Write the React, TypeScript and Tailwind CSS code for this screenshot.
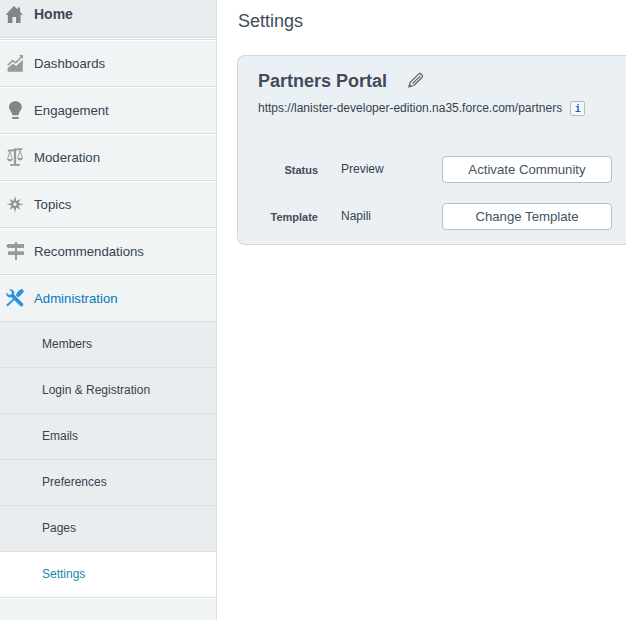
import type { ReactNode } from "react";

const icon = "-mt-px block shrink-0 overflow-visible";

const HomeIcon = () => (
  <svg className="block shrink-0 overflow-visible" width="18" height="18" viewBox="0 0 18 18" fill="#858585">
    <path d="M9 0.9 L12.6 4.5 V2.4 H15 V6.8 L18 9.8 H15.6 V18 H11 V12 H7.4 V18 H2.8 V9.8 H0.6 Z" />
  </svg>
);
const ChartIcon = () => (
  <svg className={icon} width="18" height="18" viewBox="0 0 18 18">
    <path d="M1.6 14.2 L6.8 9.8 L10.2 11.9 L16.8 5.7 V17.7 H1.6 Z" fill="#999" />
    <path d="M1.8 11.3 L6.3 6.8 L9.8 8.8 L15.6 2.8" fill="none" stroke="#999" strokeWidth="1.6" />
    <path d="M13.2 1 H17 V4.9 Z" fill="#999" />
  </svg>
);
const BulbIcon = () => (
  <svg className={icon} width="18" height="18" viewBox="0 0 18 18" fill="#858585">
    <path d="M9.4 0.2 C5.6 0.2 3 2.7 3 6 C3 9.2 5.3 10 6 13 Q6.2 14.2 7.1 14.2 H11.6 Q12.5 14.2 12.8 13 C13.4 10 15.8 9.2 15.8 6 C15.8 2.7 13.2 0.2 9.4 0.2 Z" />
    <rect x="6" y="16" width="6.8" height="1.9" rx="0.6" />
  </svg>
);
const ScalesIcon = () => (
  <svg className={icon} width="18" height="18" viewBox="0 0 18 18" fill="none" stroke="#999" strokeWidth="0.9">
    <path d="M1.8 2.6 Q5 3 8.7 1.9 T16.4 1.2" strokeWidth="1.7" />
    <path d="M9 0.5 V16.5" strokeWidth="2.2" />
    <path d="M4.2 16.9 H13.8" strokeWidth="1.8" />
    <path d="M3.8 3.4 L1.6 11 M3.8 3.4 L6.3 11 M14.1 2.4 L11.9 10 M14.1 2.4 L16.4 10" />
    <path d="M1 11 H6.9 Q6.4 13.4 4 13.4 Q1.5 13.4 1 11 Z M11.2 10 H17 Q16.5 12.4 14.1 12.4 Q11.7 12.4 11.2 10 Z" fill="#999" stroke="none" />
  </svg>
);
const StarIcon = () => (
  <svg className={icon} width="18" height="18" viewBox="0 0 18 18" fill="#929292">
    <path fillRule="evenodd" d="M9 1 L10.3 6 L14.5 3.9 L12.3 8 L17.4 9.3 L12.3 10.6 L14.5 14.7 L10.3 12.6 L9 17.6 L7.7 12.6 L3.5 14.7 L5.7 10.6 L0.6 9.3 L5.7 8 L3.5 3.9 L7.7 6 Z M9 7.6 A1.7 1.7 0 1 0 9 11 A1.7 1.7 0 1 0 9 7.6 Z" />
  </svg>
);
const SignIcon = () => (
  <svg className={icon} width="18" height="18" viewBox="0 0 18 18" fill="#999">
    <path d="M2 2 H18 V6 H2 L0 4 Z M2 9.2 H18 V13 H2 Z M9 0 H11 V18 H9 Z" />
  </svg>
);
const ToolsIcon = () => (
  <svg className={icon} width="18" height="18" viewBox="0 0 18 18" fill="#2c94d8">
    <path d="M3.2 0.5 Q6.2 -0.2 7.8 2 Q8.8 3.6 8 5.5 L17 14.5 Q17.8 16 16.8 17 Q15.6 18.1 14.2 17.1 L5.4 8.2 Q3.1 8.8 1.5 7.4 Q-0.3 5.7 0.3 3.4 L3 6 L5.5 5.3 L6 3.1 Z" />
    <path d="M1 15.2 L7.6 9.3 L8.8 10.5 L2.5 16.8 L0.5 17.5 Z" />
    <path d="M9.8 6.2 Q10.4 3.3 14.6 0.3 Q16.2 -0.3 17.2 0.9 Q18 2.1 17.3 3.2 Q14.5 7.2 11.8 8.2 Z" />
  </svg>
);
const PencilIcon = () => (
  <svg className="-mt-[2px] block shrink-0 overflow-visible" width="16" height="16" viewBox="0 0 16 16" fill="none" stroke="#666" strokeWidth="1.3" strokeLinejoin="round">
    <path d="M0.9 15 L2.3 10.1 L10.8 1.9 Q11.8 1 13 2 L14.2 3.2 Q15 4.4 14.2 5.3 L5.8 13.5 Z" />
    <path d="M4.5 11.5 L12.5 3.8" strokeWidth="1.1" />
    <path d="M0.6 15.3 L1.6 12 L4 14.3 Z" fill="#666" stroke="none" />
  </svg>
);

function MainItem({ label, children, last, active }: { label: string; children: ReactNode; last?: boolean; active?: boolean }) {
  return (
    <li className={`flex h-[47px] items-center border-t border-b border-t-white pl-[6px] ${last ? "border-b-[#d8dfe2]" : "border-b-[#d9dfe1]"}`}>
      {children}
      <span className={`ml-[10px] text-[13.2px] leading-4 ${active ? "text-[#077ab8]" : "text-[#36434f]"}`}>{label}</span>
    </li>
  );
}

function SubItem({ label, selected }: { label: string; selected?: boolean }) {
  return (
    <li className={`flex h-[46px] items-center border-b border-[#dbe2e5] pb-[2px] pl-[42px] text-[12px] leading-4 ${selected ? "bg-white text-[#168aae]" : "bg-[#e9edf0] text-[#36434f]"}`}>
      {label}
    </li>
  );
}

function Field({ label, value, action }: { label: string; value: string; action: string }) {
  return (
    <div className="flex h-[27px]">
      <span className="w-[60px] pt-[6px] text-right text-[11px] leading-4 font-bold text-[#4a4a56]">{label}</span>
      <span className="ml-[23px] w-[101px] pt-[5px] text-[12px] leading-4 text-[#36434f]">{value}</span>
      <button className="h-[27px] w-[170px] rounded-[4px] border border-[#b7bec4] bg-white text-[13.2px] leading-4 text-[#3f5360]">{action}</button>
    </div>
  );
}

export default function App() {
  return (
    <div className="flex h-[620px] w-[626px] overflow-hidden bg-white font-['Liberation_Sans',Arial,sans-serif]">
      <aside className="h-full w-[217px] shrink-0 border-r border-[#d8e0e4] bg-[#f0f4f5]">
        <div className="flex h-[38px] border-b border-[#d8dfe2] bg-[#e9edf0] pt-[5px] pl-[5px]">
          <HomeIcon />
          <span className="ml-[11px] pt-px text-[14px] leading-4 font-bold text-[#3c4857]">Home</span>
        </div>
        <div className="h-[2px] border-b border-[#d9dfe1] bg-white" />
        <ul>
          <MainItem label="Dashboards"><ChartIcon /></MainItem>
          <MainItem label="Engagement"><BulbIcon /></MainItem>
          <MainItem label="Moderation"><ScalesIcon /></MainItem>
          <MainItem label="Topics"><StarIcon /></MainItem>
          <MainItem label="Recommendations"><SignIcon /></MainItem>
          <MainItem label="Administration" active last><ToolsIcon /></MainItem>
        </ul>
        <ul>
          <SubItem label="Members" />
          <SubItem label="Login &amp; Registration" />
          <SubItem label="Emails" />
          <SubItem label="Preferences" />
          <SubItem label="Pages" />
          <SubItem label="Settings" selected />
        </ul>
        <div className="h-px bg-white" />
      </aside>
      <main className="w-[409px] pt-[10px] pl-[20px]">
        <h1 className="pl-px text-[18px] leading-[22px] text-[#414c59]">Settings</h1>
        <section className="mt-[23px] h-[190px] rounded-l-[8px] border border-r-0 border-[#d1d8da] bg-[#ebf0f4] pt-[14px] pl-[20px]">
          <div className="flex items-center">
            <h2 className="mr-[21px] text-[18px] leading-[22px] font-bold text-[#414c5b]">Partners Portal</h2>
            <PencilIcon />
          </div>
          <div className="mt-[8px] flex h-4 items-center">
            <span className="text-[12px] leading-4 text-[#36434f]">https://lanister-developer-edition.na35.force.com/partners</span>
            <span className="ml-[8px] flex h-[15px] w-[15px] items-center justify-center rounded-[2px] border border-[#b9bdc1] bg-[#f6f7f8] pt-[3px] font-['Liberation_Mono',monospace] text-[10px] leading-none font-bold text-[#1560c0]">i</span>
          </div>
          <div className="mt-[40px] flex flex-col gap-[20px]">
            <Field label="Status" value="Preview" action="Activate Community" />
            <Field label="Template" value="Napili" action="Change Template" />
          </div>
        </section>
      </main>
    </div>
  );
}
